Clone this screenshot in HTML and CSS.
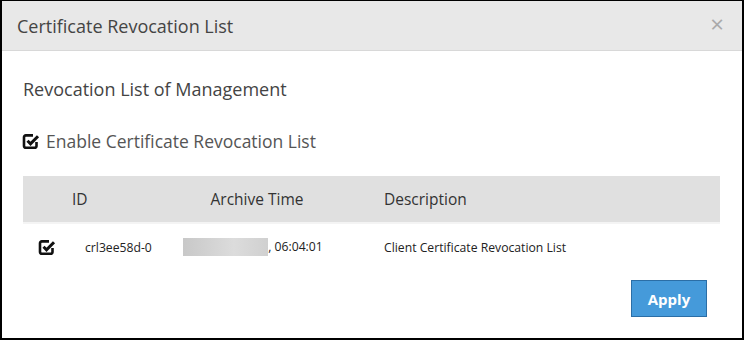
FILE: index.html
```html
<!DOCTYPE html>
<html>
<head>
  <title>Certificate Revocation List</title>
  <link rel="stylesheet" href="styles.css">
</head>
<body>
  <div class="modal">
    <div class="modal-head">
      <h3 class="modal-title">Certificate Revocation List</h3>
      <span class="close">&times;</span>
    </div>
    <div class="modal-body">
      <h4 class="section">Revocation List of Management</h4>
      <label class="enable">
        <svg class="check" viewBox="0 0 18 18" width="18" height="18">
          <path d="M14.5 10v4a1.8 1.8 0 0 1-1.8 1.8H3.8A1.8 1.8 0 0 1 2 14V5.2a1.8 1.8 0 0 1 1.8-1.8H11" fill="none" stroke="#111" stroke-width="2.6"/>
          <path d="M5.5 8.8l3 3L16 4.2" fill="none" stroke="#111" stroke-width="3"/>
        </svg>
        Enable Certificate Revocation List
      </label>
      <table class="crl">
        <thead>
          <tr>
            <th class="c-chk"></th>
            <th class="c-id">ID</th>
            <th class="c-time">Archive Time</th>
            <th class="c-desc">Description</th>
          </tr>
        </thead>
        <tbody>
          <tr>
            <td class="c-chk">
              <svg class="check" viewBox="0 0 18 18" width="18" height="18">
                <path d="M14.5 10v4a1.8 1.8 0 0 1-1.8 1.8H3.8A1.8 1.8 0 0 1 2 14V5.2a1.8 1.8 0 0 1 1.8-1.8H11" fill="none" stroke="#111" stroke-width="2.6"/>
                <path d="M5.5 8.8l3 3L16 4.2" fill="none" stroke="#111" stroke-width="3"/>
              </svg>
            </td>
            <td class="c-id">crl3ee58d-0</td>
            <td class="c-time"><span class="blur"></span>, 06:04:01</td>
            <td class="c-desc">Client Certificate Revocation List</td>
          </tr>
        </tbody>
      </table>
      <div class="actions">
        <button class="btn">Apply</button>
      </div>
    </div>
  </div>
</body>
</html>
```

FILE: styles.css
```css
html, body {
  margin: 0;
  padding: 0;
  background: #fff;
}
.modal {
  width: 744px;
  height: 340px;
  box-sizing: border-box;
  border: 2px solid #000;
  border-top-width: 1px;
  font-family: "Open Sans", sans-serif;
  color: #444;
}
.modal-head {
  height: 49px;
  background: #e8e8e8;
  border-bottom: 1px solid #d8d8d8;
  display: flex;
  align-items: center;
  justify-content: space-between;
  padding: 0 18px 0 15px;
}
.modal-title {
  margin: 0;
  font-size: 18px;
  font-weight: normal;
  color: #444;
}
.close {
  font-size: 24px;
  color: #aaa;
  line-height: 1;
  margin-top: -4px;
}
.modal-body {
  padding: 26px 21px 0 21px;
}
.section {
  margin: 0;
  font-size: 18px;
  font-weight: 500;
  color: #444;
  line-height: 24px;
}
.enable {
  display: flex;
  align-items: center;
  gap: 6px;
  margin-top: 28px;
  margin-left: -1px;
  font-size: 17.5px;
  color: #555;
  line-height: 24px;
}
.crl {
  margin-top: 23px;
  width: 697px;
  table-layout: fixed;
  border-collapse: collapse;
}
.crl th {
  background: #e0e0e0;
  height: 46px;
  font-size: 15.5px;
  font-weight: normal;
  color: #333;
  border-bottom: 2px solid #f4f4f4;
  padding: 0;
}
.crl td {
  height: 46px;
  font-size: 12.2px;
  color: #222;
  padding: 0;
  white-space: nowrap;
}
.c-chk {
  width: 48px;
}
.c-chk .check {
  display: block;
  margin: 0 0 0 15px;
}
.c-id {
  width: 70px;
}
th.c-id {
  text-align: left;
  padding-left: 1px;
}
td.c-id {
  padding-left: 14px;
}
.c-time {
  width: 230px;
  text-align: center;
}
td.c-time {
  padding-right: 8px;
}
.blur {
  display: inline-block;
  width: 85px;
  height: 18px;
  vertical-align: middle;
  background: linear-gradient(90deg, #c8c8c8, #dcdcdc 60%, #d0d0d0);
}
th.c-desc, td.c-desc {
  text-align: left;
  padding-left: 12px;
}
.actions {
  display: flex;
  justify-content: flex-end;
  padding: 10px 14px 0 0;
}
.btn {
  width: 76px;
  height: 37px;
  background: #459ada;
  border: 1px solid #2b6ea6;
  color: #fff;
  font-family: "Open Sans", sans-serif;
  font-size: 15px;
  font-weight: bold;
}
```
